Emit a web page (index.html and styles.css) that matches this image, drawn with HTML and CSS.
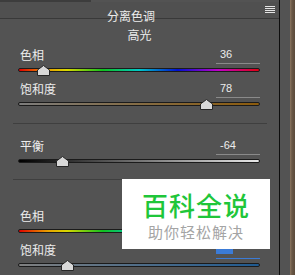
FILE: index.html
```html
<!DOCTYPE html>
<html lang="zh-CN">
<head>
    <meta charset="UTF-8">
    <meta name="viewport" content="width=device-width, initial-scale=1.0">
    <title>分离色调</title>
    <link rel="stylesheet" href="styles.css">
</head>
<body>
<div class="app">
    <div class="panel">
        <div class="topstrip"></div>
        <div class="header">
            <span class="title">分离色调</span>
            <span class="menu"><i></i><i></i><i></i><i></i></span>
        </div>

        <div class="group-title">高光</div>
        <div class="param first">
            <div class="label-row"><span class="label">色相</span><span class="value">36</span></div>
            <div class="track hue">
                <svg class="thumb" style="left: calc(10% - 6px)" width="13" height="11" viewBox="0 0 13 11"><path d="M6.5 0.5 L12.5 5 L12.5 10.5 L0.5 10.5 L0.5 5 Z"/></svg>
            </div>
        </div>
        <div class="param">
            <div class="label-row"><span class="label">饱和度</span><span class="value">78</span></div>
            <div class="track sat-high">
                <svg class="thumb" style="left: calc(78% - 6px)" width="13" height="11" viewBox="0 0 13 11"><path d="M6.5 0.5 L12.5 5 L12.5 10.5 L0.5 10.5 L0.5 5 Z"/></svg>
            </div>
        </div>

        <div class="separator"></div>

        <div class="param balance">
            <div class="label-row"><span class="label">平衡</span><span class="value">-64</span></div>
            <div class="track bw">
                <svg class="thumb" style="left: calc(18% - 6px)" width="13" height="11" viewBox="0 0 13 11"><path d="M6.5 0.5 L12.5 5 L12.5 10.5 L0.5 10.5 L0.5 5 Z"/></svg>
            </div>
        </div>

        <div class="separator lower"></div>

        <!-- shadows group, title and values sit under the watermark -->
        <div class="group-title"></div>
        <div class="param first">
            <div class="label-row"><span class="label">色相</span><span class="value"></span></div>
            <div class="track hue">
                <svg class="thumb" style="left: calc(58% - 6px)" width="13" height="11" viewBox="0 0 13 11"><path d="M6.5 0.5 L12.5 5 L12.5 10.5 L0.5 10.5 L0.5 5 Z"/></svg>
            </div>
        </div>
        <div class="param">
            <div class="label-row"><span class="label">饱和度</span><span class="value active"><span class="selection"></span></span></div>
            <div class="track sat-low">
                <svg class="thumb" style="left: calc(20% - 6px)" width="13" height="11" viewBox="0 0 13 11"><path d="M6.5 0.5 L12.5 5 L12.5 10.5 L0.5 10.5 L0.5 5 Z"/></svg>
            </div>
        </div>
    </div>
    <div class="edge"></div>

    <div class="watermark">
        <div class="brand">百科全说</div>
        <div class="slogan">助你轻松解决</div>
    </div>
</div>
</body>
</html>
```

FILE: styles.css
```css
body {
    margin: 0;
    background: #535353;
    font-family: "Noto Sans CJK SC", "Noto Sans", sans-serif;
    color: #ececec;
}
.app {
    position: relative;
    display: flex;
    width: 295px;
    height: 275px;
    overflow: hidden;
}
.panel {
    width: 279px;
    background: #535353;
}
.topstrip {
    width: 91px;
    height: 2px;
    background: #3d3d3d;
}
.header {
    position: relative;
    height: 16px;
    background: #505050;
    border-bottom: 1px solid #393939;
    text-align: center;
    padding-right: 17px;
}
.title {
    font-size: 12px;
    line-height: 16px;
}
.menu {
    position: absolute;
    right: 4px;
    top: 4px;
    display: flex;
    flex-direction: column;
    gap: 1px;
}
.menu i {
    display: block;
    width: 10px;
    height: 1px;
    background: #e4e4e4;
}
.group-title {
    height: 16px;
    margin-top: 8px;
    font-size: 12px;
    line-height: 16px;
    text-align: center;
}
.param {
    margin-top: 9px;
    padding: 0 19px 0 18px;
}
.param.first {
    margin-top: 4px;
}
.param.balance {
    margin-top: 14px;
}
.label-row {
    display: flex;
    justify-content: space-between;
    height: 17px;
}
.label {
    padding-left: 2px;
    font-size: 12px;
    line-height: 16px;
}
.value {
    box-sizing: border-box;
    width: 44px;
    height: 17px;
    padding: 1px 0 0 4px;
    border-bottom: 1px solid #8a8a8a;
    font-family: "Liberation Sans", sans-serif;
    font-size: 11px;
    line-height: 13px;
}
.value.active {
    border-bottom-color: #3b7bd6;
}
.selection {
    display: block;
    width: 17px;
    height: 11px;
    margin-left: -4px;
    background: #3b7bd6;
}
.track {
    position: relative;
    box-sizing: border-box;
    height: 4px;
    margin-top: 4px;
    border: 1px solid #1b1b1b;
    border-radius: 2px;
}
.track.hue {
    background: linear-gradient(to right, #e00000, #e8a000 12%, #d8d800 20%, #10c020 35%, #00c8c8 50%, #0010d0 66%, #c000c8 83%, #e00010);
}
.track.sat-high {
    background: linear-gradient(to right, #7d7d7d, #8c5b0c);
}
.track.bw {
    background: linear-gradient(to right, #000000, #e8e8e8);
}
.track.sat-low {
    background: linear-gradient(to right, #808080, #1f5a90);
}
.thumb {
    position: absolute;
    top: -4px;
}
.thumb path {
    fill: #d8d8d8;
    stroke: #262626;
    stroke-width: 1;
}
.separator {
    height: 1px;
    margin: 17px 12px 0 13px;
    background: #3f3f3f;
}
.separator.lower {
    margin-top: 16px;
}
.edge {
    flex: 1;
    border-left: 1px solid #0e0e0e;
    background: linear-gradient(to right, #535353 0, #535353 10px, #8c7660 10px, #6a5846 12px, #5b4a3a);
}
.watermark {
    position: absolute;
    left: 122px;
    top: 179px;
    width: 148px;
    height: 70px;
    background: #ffffff;
    display: flex;
    flex-direction: column;
    align-items: center;
}
.brand {
    margin-top: 10px;
    color: #1fc63a;
    font-size: 26px;
    font-weight: 500;
    line-height: 32px;
    letter-spacing: 1px;
}
.slogan {
    margin-top: 2px;
    color: #a4a4a4;
    font-size: 15px;
    line-height: 18px;
    letter-spacing: 1px;
}
```
